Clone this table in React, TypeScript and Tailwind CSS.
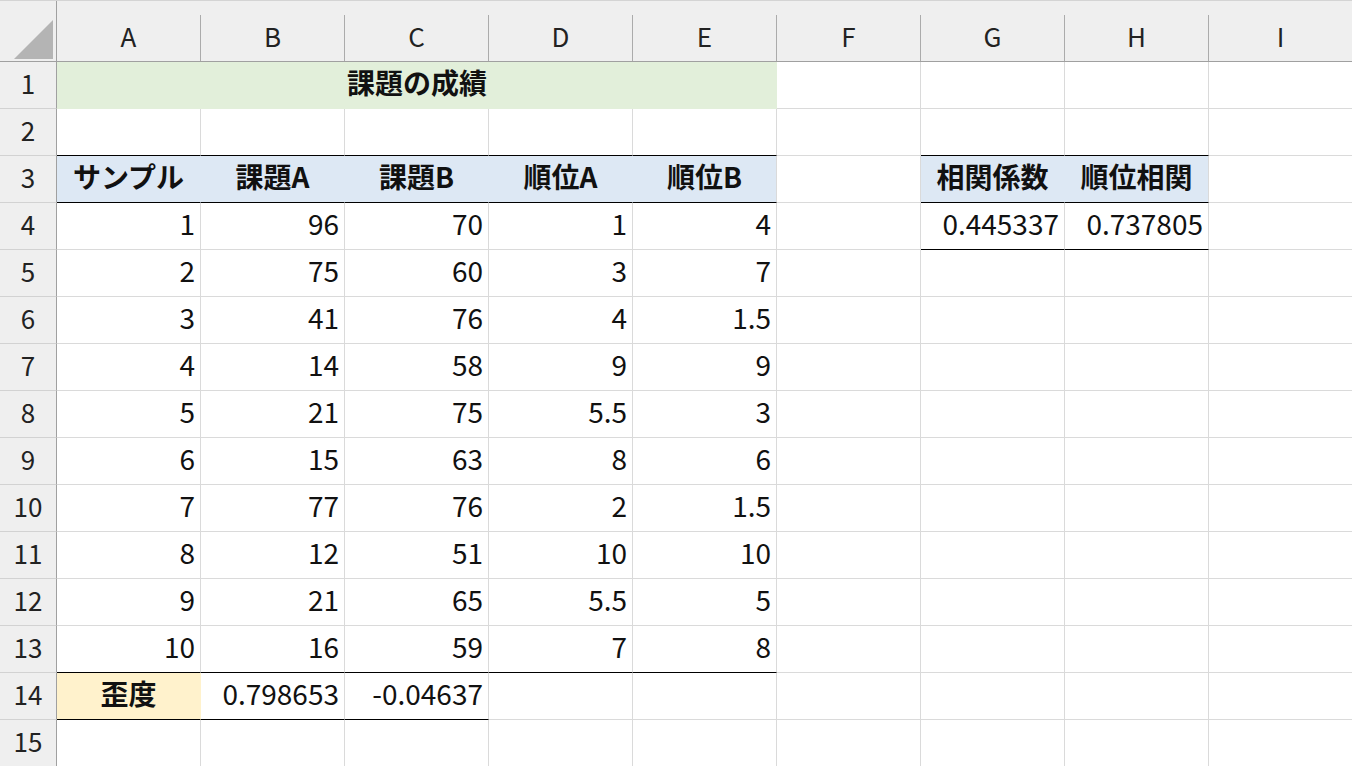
const COLS = ['A', 'B', 'C', 'D', 'E', 'F', 'G', 'H', 'I']

type Cell = {
  text?: string
  bold?: boolean
  align?: 'left' | 'center' | 'right'
  bg?: string
  edge?: string
  bottom?: boolean
}

const data: (string | number)[][] = [
  [1, 96, 70, 1, 4],
  [2, 75, 60, 3, 7],
  [3, 41, 76, 4, 1.5],
  [4, 14, 58, 9, 9],
  [5, 21, 75, 5.5, 3],
  [6, 15, 63, 8, 6],
  [7, 77, 76, 2, 1.5],
  [8, 12, 51, 10, 10],
  [9, 21, 65, 5.5, 5],
  [10, 16, 59, 7, 8],
]

const blue = 'bg-[#dde8f4]'
const blueEdge = 'border-r-[#dde8f4]'

function buildRows(): Cell[][] {
  const rows: Cell[][] = []
  for (let r = 1; r <= 15; r++) rows.push(COLS.map(() => ({})))
  // black line on top of the header rows
  for (let c = 0; c < 5; c++) rows[1][c].bottom = true
  rows[1][6].bottom = true
  rows[1][7].bottom = true
  ;['サンプル', '課題A', '課題B', '順位A', '順位B'].forEach((t, c) => {
    rows[2][c] = { text: t, bold: true, align: 'center', bg: blue, edge: c < 4 ? blueEdge : undefined, bottom: true }
  })
  rows[2][6] = { text: '相関係数', bold: true, align: 'center', bg: blue, edge: blueEdge, bottom: true }
  rows[2][7] = { text: '順位相関', bold: true, align: 'center', bg: blue, bottom: true }
  rows[3][6] = { text: '0.445337', align: 'right', bottom: true }
  rows[3][7] = { text: '0.737805', align: 'right', bottom: true }
  data.forEach((vals, i) => {
    vals.forEach((v, c) => {
      rows[3 + i][c] = { ...rows[3 + i][c], text: String(v), align: 'right', bottom: i === 9 }
    })
  })
  rows[13][0] = { text: '歪度', bold: true, align: 'center', bg: 'bg-[#fff2cc]', edge: 'border-r-[#fff2cc]', bottom: true }
  rows[13][1] = { text: '0.798653', align: 'right', bottom: true }
  rows[13][2] = { text: '-0.04637', align: 'right', bottom: true }
  return rows
}

export default function App() {
  const rows = buildRows()
  return (
    <div
      className="w-[1352px] h-[766px] overflow-hidden bg-white text-[#111] border-t border-[#d4d4d4]"
      style={{ fontFamily: '"Noto Sans CJK JP", "Noto Sans", sans-serif' }}
    >
      {/* column headers */}
      <div className="flex h-[61px] bg-[#efefef] border-b border-[#a0a0a0]">
        <div className="w-[57px] shrink-0 relative border-r border-[#a0a0a0]">
          <svg className="absolute left-[14px] top-[19px]" width="39" height="39" viewBox="0 0 39 39">
            <polygon points="39,0 39,39 0,39" fill="#b4b4b4" />
          </svg>
        </div>
        {COLS.map((c) => (
          <div key={c} className="w-[144px] shrink-0 flex items-end">
            <div className="flex-1 h-full flex items-center justify-center text-[26px] text-[#222] pt-[8px]">{c}</div>
            <div className="w-px h-[46px] bg-[#ababab]" />
          </div>
        ))}
      </div>

      {rows.map((row, ri) => (
        <div key={ri} className="flex h-[47px]">
          <div className="w-[57px] shrink-0 bg-[#efefef] border-r border-[#a0a0a0] border-b border-b-[#d2d2d2] flex items-center justify-center text-[26px] text-[#222] pb-[6px]">
            {ri + 1}
          </div>
          {ri === 0 ? (
            <>
              <div className="w-[720px] shrink-0 bg-[#e2efda] border-b border-[#e2efda] flex items-center justify-center text-[28px] font-bold pb-[6px]">
                課題の成績
              </div>
              {COLS.slice(5).map((c) => (
                <div key={c} className="w-[144px] shrink-0 border-r border-b border-[#dadada]" />
              ))}
            </>
          ) : (
            row.map((cell, ci) => (
              <div
                key={ci}
                className={`w-[144px] shrink-0 border-r border-b flex items-center px-[5px] pb-[6px] text-[28px] ${
                  cell.edge ?? 'border-r-[#dadada]'
                } ${cell.bottom ? 'border-b-black' : 'border-b-[#dadada]'} ${cell.bg ?? ''} ${
                  cell.bold ? 'font-bold' : ''
                } ${cell.align === 'center' ? 'justify-center' : cell.align === 'right' ? 'justify-end' : 'justify-start'}`}
              >
                {cell.text}
              </div>
            ))
          )}
        </div>
      ))}
    </div>
  )
}
